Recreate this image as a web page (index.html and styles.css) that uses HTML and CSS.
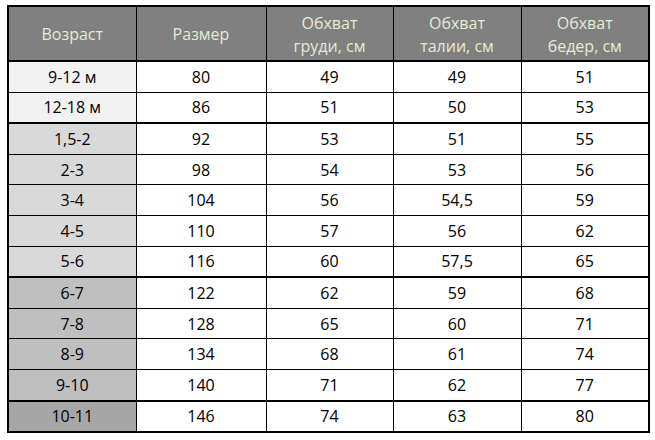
FILE: index.html
```html
<!DOCTYPE html>
<html lang="ru">
<head>
<meta charset="utf-8">
<link rel="stylesheet" href="styles.css">
</head>
<body>
<table class="sizes">
  <colgroup>
    <col class="c1"><col class="c2"><col class="c3"><col class="c4"><col class="c5">
  </colgroup>
  <thead>
    <tr class="head">
      <th>Возраст</th>
      <th>Размер</th>
      <th>Обхват<br>груди, см</th>
      <th>Обхват<br>талии, см</th>
      <th>Обхват<br>бедер, см</th>
    </tr>
  </thead>
  <tbody class="g1">
    <tr><td class="age">9-12 м</td><td>80</td><td>49</td><td>49</td><td>51</td></tr>
    <tr><td class="age">12-18 м</td><td>86</td><td>51</td><td>50</td><td>53</td></tr>
  </tbody>
  <tbody class="g2">
    <tr><td class="age">1,5-2</td><td>92</td><td>53</td><td>51</td><td>55</td></tr>
    <tr><td class="age">2-3</td><td>98</td><td>54</td><td>53</td><td>56</td></tr>
    <tr><td class="age">3-4</td><td>104</td><td>56</td><td>54,5</td><td>59</td></tr>
    <tr><td class="age">4-5</td><td>110</td><td>57</td><td>56</td><td>62</td></tr>
    <tr><td class="age">5-6</td><td>116</td><td>60</td><td>57,5</td><td>65</td></tr>
  </tbody>
  <tbody class="g3">
    <tr><td class="age">6-7</td><td>122</td><td>62</td><td>59</td><td>68</td></tr>
    <tr><td class="age">7-8</td><td>128</td><td>65</td><td>60</td><td>71</td></tr>
    <tr><td class="age">8-9</td><td>134</td><td>68</td><td>61</td><td>74</td></tr>
    <tr><td class="age">9-10</td><td>140</td><td>71</td><td>62</td><td>77</td></tr>
  </tbody>
  <tbody class="g4">
    <tr><td class="age">10-11</td><td>146</td><td>74</td><td>63</td><td>80</td></tr>
  </tbody>
</table>
</body>
</html>
```
FILE: styles.css
```css
html, body {
  margin: 0;
  background: #ffffff;
}
body {
  padding: 5px 0 0 7px;
  font-family: "Open Sans", "Noto Sans", sans-serif;
  font-size: 16px;
  color: #000;
}
.sizes {
  border-collapse: collapse;
  table-layout: fixed;
  width: 641px;
  border: 2px solid #000;
}
.c1 { width: 128px; }
.c2 { width: 130px; }
.c3 { width: 127px; }
.c4 { width: 128px; }
.c5 { width: 128px; }
.sizes th,
.sizes td {
  padding: 0;
  text-align: center;
  vertical-align: middle;
  border: 1px solid #000;
}
.head th {
  background: #808080;
  color: #e3ebd5;
  font-weight: 400;
  line-height: 23px;
  height: 51px;
  padding-top: 2px;
  border-bottom: 2px solid #000;
}
.sizes td {
  height: 29.6px;
  line-height: 20px;
}
.sizes tbody {
  border-bottom: 2px solid #000;
}
.g1 .age { background: #f2f2f2; }
.g2 .age { background: #d9d9d9; }
.g3 .age { background: #bfbfbf; }
.g4 .age { background: #a6a6a6; }
```
